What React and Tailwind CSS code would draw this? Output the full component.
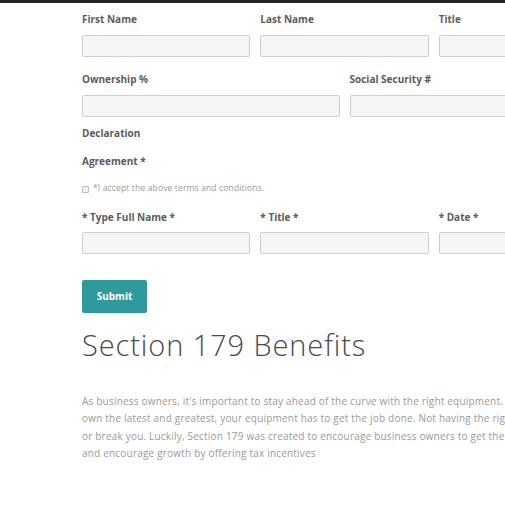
const Label = ({ children }) => (
    <div className="h-[14px] flex items-center text-[10px] font-bold text-[#5c5c5c] whitespace-nowrap">{children}</div>
);

const Field = () => (
    <div className="h-[22px] bg-[#f5f5f5] border border-[#cfcfcf] rounded-[2px]" />
);

const PARAGRAPH = [
    "As business owners, it's important to stay ahead of the curve with the right equipment. While you don't have to",
    'own the latest and greatest, your equipment has to get the job done. Not having the right equipment can make',
    'or break you. Luckily, Section 179 was created to encourage business owners to get the equipment they need',
    'and encourage growth by offering tax incentives',
];

export default function App() {
    return (
        <div className="w-[505px] h-[505px] overflow-hidden bg-white font-['Open_Sans',sans-serif]">
            <div className="h-[3px] bg-[#222]" />
            <div className="pl-[82px] pt-[9px] w-[607px]">
                <div className="grid grid-cols-3 gap-x-[10px]">
                    {['First Name', 'Last Name', 'Title'].map((l) => (
                        <div key={l}>
                            <Label>{l}</Label>
                            <div className="mt-[9px]"><Field /></div>
                        </div>
                    ))}
                </div>

                <div className="grid grid-cols-2 gap-x-[10px] mt-[15px]">
                    {['Ownership %', 'Social Security #'].map((l) => (
                        <div key={l}>
                            <Label>{l}</Label>
                            <div className="mt-[9px]"><Field /></div>
                        </div>
                    ))}
                </div>

                <div className="mt-[9px]"><Label>Declaration</Label></div>
                <div className="mt-[14px]"><Label>Agreement *</Label></div>

                <div className="mt-[15px] h-[10px] flex items-center gap-[4px]">
                    <span className="w-[7px] h-[7px] border border-[#bbb] rounded-[1px] bg-[#f3f3f3] mt-[3px]" />
                    <span className="text-[8.5px] tracking-[0.15px] text-[#999] whitespace-nowrap">*I accept the above terms and conditions.</span>
                </div>

                <div className="grid grid-cols-3 gap-x-[10px] mt-[17px]">
                    {['* Type Full Name *', '* Title *', '* Date *'].map((l) => (
                        <div key={l}>
                            <Label>{l}</Label>
                            <div className="mt-[8px]"><Field /></div>
                        </div>
                    ))}
                </div>

                <button className="mt-[26px] w-[65px] h-[33px] bg-[#2f9a9c] text-white text-[10px] font-bold rounded-[2px] flex items-center justify-center">
                    Submit
                </button>

                <h2 className="mt-[12px] text-[29px] leading-[40px] tracking-[0.9px] font-light text-[#4a4a4a] whitespace-nowrap">Section 179 Benefits</h2>

                <div className="mt-[28px] text-[10px] tracking-[0.2px] leading-[17.4px] text-[#9a9a9a]">
                    {PARAGRAPH.map((line) => (
                        <div key={line} className="whitespace-nowrap">{line}</div>
                    ))}
                </div>
            </div>
        </div>
    );
}
